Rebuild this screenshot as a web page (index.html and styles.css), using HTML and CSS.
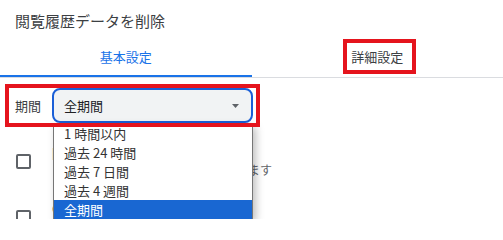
FILE: index.html
```html
<!DOCTYPE html>
<html lang="ja">
<head>
<meta charset="utf-8">
<title>閲覧履歴データを削除</title>
<link rel="stylesheet" href="styles.css">
</head>
<body>
<div class="dialog">
  <div class="title">閲覧履歴データを削除</div>
  <div class="tabs">
    <div class="tab active">基本設定</div>
    <div class="tab">詳細設定</div>
  </div>
  <div class="period-row">
    <span class="period-label">期間</span>
    <div class="select">
      <span class="select-value">全期間</span>
      <svg class="arrow" width="7" height="4" viewBox="0 0 7 4"><path d="M0 0H7L3.5 4Z" fill="#5f6368"/></svg>
    </div>
  </div>
  <div class="option">
    <span class="checkbox"></span>
    <div class="option-text">
      <div class="option-label">閲覧履歴</div>
      <div class="option-desc">ログイン中デバイスの履歴を削除します</div>
    </div>
  </div>
  <div class="option">
    <span class="checkbox"></span>
    <div class="option-text">
      <div class="option-label">Cookie と他のサイトデータ</div>
      <div class="option-desc">ほとんどのサイトからログアウトします</div>
    </div>
  </div>

  <ul class="listbox">
    <li class="item">1 時間以内</li>
    <li class="item">過去 24 時間</li>
    <li class="item">過去 7 日間</li>
    <li class="item">過去 4 週間</li>
    <li class="item selected">全期間</li>
  </ul>

  <div class="annot annot-tab"></div>
  <div class="annot annot-period"></div>
</div>
</body>
</html>
```

FILE: styles.css
```css
* { box-sizing: border-box; }
html, body { margin: 0; padding: 0; background: #fff; }
body {
  font-family: "Noto Sans CJK JP", "Noto Sans", sans-serif;
  color: #202124;
}
.dialog {
  position: relative;
  width: 503px;
  height: 219px;
  overflow: hidden;
}
.title {
  height: 42px;
  line-height: 42px;
  padding-left: 15px;
  font-size: 15px;
  color: #3c4043;
}
.tabs {
  display: flex;
  height: 36px;
  border-bottom: 1px solid #dadce0;
}
.tab {
  flex: 1;
  display: flex;
  align-items: center;
  justify-content: center;
  padding-bottom: 6px;
  font-size: 13px;
  color: #3c4043;
}
.tab.active {
  color: #1a73e8;
  box-shadow: inset 0 -2px 0 #1a73e8;
}
.period-row {
  display: flex;
  align-items: center;
  padding: 10px 0 0 15px;
}
.period-label {
  width: 37px;
  font-size: 13px;
  color: #3c4043;
}
.select {
  width: 201px;
  height: 35px;
  border: 2px solid #1a5fd7;
  border-radius: 8px;
  background: #f1f3f4;
  display: flex;
  align-items: center;
  justify-content: space-between;
  padding: 0 12px 0 10px;
  font-size: 13px;
  color: #202124;
}
.arrow { display: block; }
.option {
  display: flex;
  align-items: center;
  height: 56px;
  margin-top: 10px;
  padding-left: 16px;
}
.option + .option { margin-top: 0; }
.checkbox {
  width: 15px;
  height: 15px;
  border: 2px solid #5f6368;
  border-radius: 2px;
  flex: none;
}
.option-text {
  margin-left: 21px;
}
.option-label {
  font-size: 13px;
  line-height: 17px;
  color: #202124;
}
.option-desc {
  font-size: 12px;
  line-height: 17px;
  letter-spacing: 0.25px;
  color: #5f6368;
}
.listbox {
  position: absolute;
  left: 53px;
  top: 124px;
  width: 200px;
  margin: 0;
  padding: 0;
  list-style: none;
  background: #fff;
  border-left: 1px solid #767676;
  border-right: 1px solid #767676;
  box-shadow: 3px 3px 8px rgba(0,0,0,0.25);
}
.item {
  height: 19px;
  line-height: 19px;
  padding-left: 10px;
  font-size: 13px;
  color: #333;
}
.item.selected {
  background: #1967d2;
  color: #fff;
}
.annot {
  position: absolute;
  border: 4px solid #e5141d;
}
.annot-tab {
  left: 343px;
  top: 39px;
  width: 73px;
  height: 35px;
}
.annot-period {
  left: 5px;
  top: 84px;
  width: 255px;
  height: 43px;
}
```
